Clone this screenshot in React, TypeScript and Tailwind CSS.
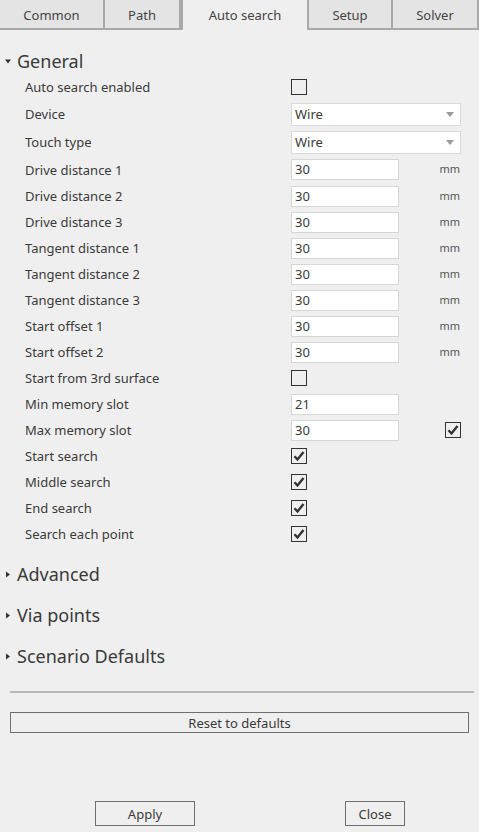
import { ReactNode } from "react"

const tabs = ["Common", "Path", "Auto search", "Setup", "Solver"]
const tabWidths = ["w-[105px]", "w-[76px]", "w-[128px]", "w-[84px]", "flex-1"]

function Checkbox({ checked }: { checked?: boolean }) {
    return (
        <div className="w-[16px] h-[16px] border-[1.5px] border-[#333] flex items-center justify-center">
            {checked && (
                <svg width="12" height="12" viewBox="0 0 12 12">
                    <path d="M1.5 6.2 L4.5 9.5 L10.5 2" fill="none" stroke="#333" strokeWidth="2.4" />
                </svg>
            )}
        </div>
    )
}

function Dropdown({ value }: { value: string }) {
    return (
        <div className="w-[170px] h-[23px] bg-white border border-[#dadada] flex items-center justify-between pl-[3px] pr-[6px]">
            <span className="pt-[1px]">{value}</span>
            <svg width="8" height="5" viewBox="0 0 8 5">
                <path d="M0 0 H8 L4 5 Z" fill="#9a9a9a" />
            </svg>
        </div>
    )
}

function NumberInput({ value, unit, extra }: { value: string; unit?: boolean; extra?: ReactNode }) {
    return (
        <div className="w-[170px] flex items-center justify-between">
            <div className="w-[108px] h-[21px] bg-white border border-[#d6d6d6] flex items-center pl-[3px] pt-[1px]">{value}</div>
            {unit && <span className="text-[11px] text-[#555] pr-[1px]">mm</span>}
            {extra}
        </div>
    )
}

function Row({ label, h = "h-[26px]", children }: { label: string; h?: string; children: ReactNode }) {
    return (
        <div className={`flex items-center pl-[25px] ${h}`}>
            <div className="w-[266px] pt-[2px]">{label}</div>
            {children}
        </div>
    )
}

function Section({ title, open }: { title: string; open?: boolean }) {
    return (
        <div className={`flex items-center gap-[6px] pl-[5px] ${open ? 'h-[26px]' : 'h-[41px]'}`}>
            <svg width="6" height="7" viewBox="0 0 6 7">
                {open ? <path d="M0 1.5 H6 L3 5.5 Z" fill="#333" /> : <path d="M1 0.5 V6.5 L5 3.5 Z" fill="#333" />}
            </svg>
            <span className="text-[18px] text-[#3a3a3a]">{title}</span>
        </div>
    )
}

export default function App() {
    return (
        <div className="w-[479px] h-[832px] bg-[#efefef] text-[13px] text-[#3a3a3a] flex flex-col" style={{ fontFamily: '"Noto Sans", "Open Sans", sans-serif' }}>
            <div className="flex h-[30px]">
                {tabs.map((t, i) => (
                    <div
                        key={t}
                        className={`${tabWidths[i]} flex items-center justify-center ${i === 2
                            ? 'bg-[#efefef] border-x-2 border-[#a9a9a9] pt-[1px]'
                            : 'bg-[#e4e4e4] border-b-2 border-r-2 border-[#a9a9a9] pt-[4px]'} ${i === 4 || i === 1 ? 'border-r-0' : ''} ${i === 3 ? 'border-l-0' : ''}`}
                    >
                        <span className="text-[#444]">{t}</span>
                    </div>
                ))}
            </div>

            <div className="mt-[18px]">
                <Section title="General" open />
            </div>

            <Row label="Auto search enabled"><Checkbox /></Row>
            <Row label="Device" h="h-[28px]"><Dropdown value="Wire" /></Row>
            <Row label="Touch type" h="h-[28px]"><Dropdown value="Wire" /></Row>
            <Row label="Drive distance 1" h="h-[27px]"><NumberInput value="30" unit /></Row>
            <Row label="Drive distance 2"><NumberInput value="30" unit /></Row>
            <Row label="Drive distance 3"><NumberInput value="30" unit /></Row>
            <Row label="Tangent distance 1"><NumberInput value="30" unit /></Row>
            <Row label="Tangent distance 2"><NumberInput value="30" unit /></Row>
            <Row label="Tangent distance 3"><NumberInput value="30" unit /></Row>
            <Row label="Start offset 1"><NumberInput value="30" unit /></Row>
            <Row label="Start offset 2"><NumberInput value="30" unit /></Row>
            <Row label="Start from 3rd surface"><Checkbox /></Row>
            <Row label="Min memory slot"><NumberInput value="21" /></Row>
            <Row label="Max memory slot"><NumberInput value="30" extra={<Checkbox checked />} /></Row>
            <Row label="Start search"><Checkbox checked /></Row>
            <Row label="Middle search"><Checkbox checked /></Row>
            <Row label="End search"><Checkbox checked /></Row>
            <Row label="Search each point"><Checkbox checked /></Row>

            <div className="mt-[7px]">
                <Section title="Advanced" />
                <Section title="Via points" />
                <Section title="Scenario Defaults" />
            </div>

            <div className="mt-[14px] mx-[10px] mr-[5px] h-[2px] bg-[#b9b9b9]" />

            <div className="mt-[19px] mx-[10px] h-[21px] border border-[#6f6f6f] flex items-center justify-center pt-[2px]">
                Reset to defaults
            </div>

            <div className="mt-[68px] flex">
                <div className="ml-[95px] w-[100px] h-[25px] border border-[#6f6f6f] flex items-center justify-center pt-[3px]">Apply</div>
                <div className="ml-[150px] w-[60px] h-[25px] border border-[#6f6f6f] flex items-center justify-center pt-[3px]">Close</div>
            </div>
        </div>
    )
}
